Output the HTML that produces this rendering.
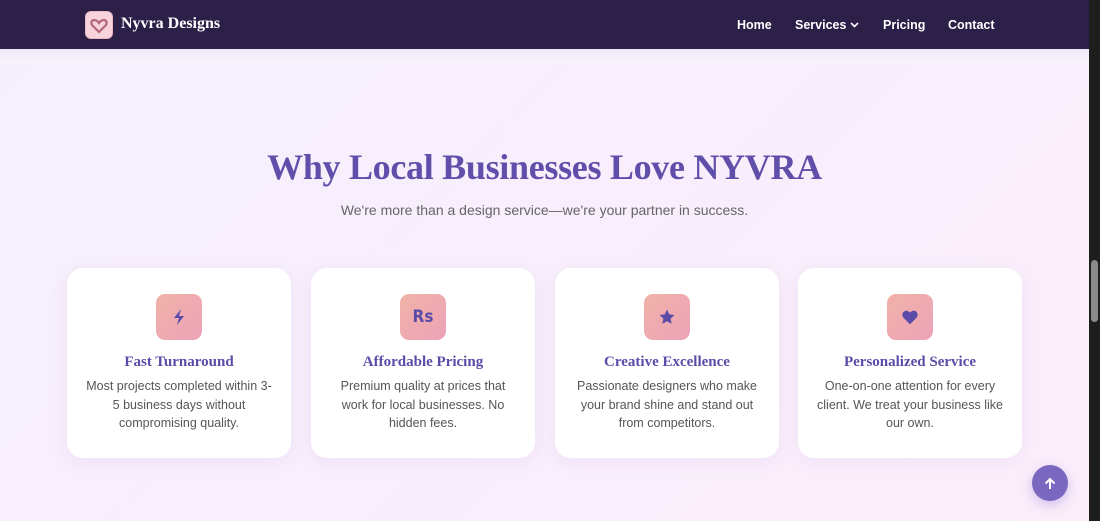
<!DOCTYPE html>
<html><head><style>
*{margin:0;padding:0;box-sizing:border-box}
body{width:1100px;height:521px;overflow:hidden;background:linear-gradient(135deg,#f5effd,#fbeefa);font-family:"Liberation Sans",sans-serif;position:relative}
.hdr{position:absolute;left:0;top:0;width:1089px;height:49px;background:#2c1f48}
.strip{position:absolute;left:0;top:49px;width:1089px;height:15px;background:linear-gradient(#eeeaf6,#f7f3fc)}
.logo{position:absolute;left:85px;top:11px;width:28px;height:28px;border-radius:6px;background:#f9d3dc;border:1px solid #e9b9c8}
.brand{position:absolute;left:121px;top:15px;color:#fff;font:bold 16px "Liberation Serif",serif}
.nav{position:absolute;top:18px;color:#fff;font-size:12.5px;font-weight:bold}
.sb{position:absolute;right:0;top:0;width:11px;height:521px;background:#1e1e1e}
.thumb{position:absolute;right:2px;top:260px;width:7px;height:62px;background:#8a8a8a;border-radius:4px}
h1{position:absolute;left:0;width:1089px;top:146px;text-align:center;color:#5f4eaa;font:bold 36px "Liberation Serif",serif;letter-spacing:-0.3px}
.sub{position:absolute;left:0;width:1089px;top:202px;text-align:center;color:#666;font-size:14px}
.card{position:absolute;top:268px;width:224px;height:190px;background:#fff;border-radius:16px;box-shadow:0 4px 18px rgba(150,110,200,.10);text-align:center}
.ic{position:absolute;left:89px;top:26px;width:46px;height:46px;border-radius:9px;background:linear-gradient(135deg,#f0b2a7,#eca3b8);display:flex;align-items:center;justify-content:center;color:#5b4ba8}
.t{position:absolute;top:86px;left:0;width:100%;color:#5b4ba8;font:bold 15px "Liberation Serif",serif}
.d{position:absolute;top:109px;left:18px;right:18px;color:#555;font-size:12.5px;line-height:18.5px}
.up{position:absolute;left:1032px;top:465px;width:36px;height:36px;border-radius:50%;background:#7a67c0;box-shadow:0 4px 12px rgba(120,100,200,.35);color:#fff;display:flex;align-items:center;justify-content:center}
</style></head><body>
<div class="hdr"></div><div class="strip"></div>
<div class="logo"><svg width="26" height="26" viewBox="0 0 26 26"><path d="M13 20 L6 13 Q4 9 8 8 Q11 8 13 11 Q15 8 18 8 Q22 9 20 13 Z" fill="none" stroke="#b5667f" stroke-width="2.2"/></svg></div>
<div class="brand">Nyvra Designs</div>
<div class="nav" style="left:737px">Home</div>
<div class="nav" style="left:795px">Services <svg width="9" height="8" viewBox="0 0 9 8"><path d="M1 2l3.5 3.5L8 2" fill="none" stroke="#fff" stroke-width="1.6"/></svg></div>
<div class="nav" style="left:883px">Pricing</div>
<div class="nav" style="left:948px">Contact</div>
<h1>Why Local Businesses Love NYVRA</h1>
<div class="sub">We're more than a design service—we're your partner in success.</div>
<div class="card" style="left:67px"><div class="ic"><svg width="16" height="18" viewBox="0 0 16 18"><path d="M10 1 L3 10 H8 L6 17 L13 8 H8 Z" fill="#5b4ba8"/></svg></div><div class="t">Fast Turnaround</div><div class="d">Most projects completed within 3-5 business days without compromising quality.</div></div>
<div class="card" style="left:311px"><div class="ic"><span style="font-size:17px;font-weight:bold;font-family:'DejaVu Sans Condensed','Liberation Sans',sans-serif">Rs</span></div><div class="t">Affordable Pricing</div><div class="d">Premium quality at prices that work for local businesses. No hidden fees.</div></div>
<div class="card" style="left:555px"><div class="ic"><svg width="18" height="18" viewBox="0 0 24 24"><path d="M12 2l3 6.5 7 .8-5.2 4.8 1.4 7L12 17.6 5.8 21l1.4-7L2 9.3l7-.8z" fill="#5b4ba8"/></svg></div><div class="t">Creative Excellence</div><div class="d">Passionate designers who make your brand shine and stand out from competitors.</div></div>
<div class="card" style="left:798px"><div class="ic"><svg width="18" height="16" viewBox="0 0 24 22"><path d="M12 21L3 12Q0 8 3 4Q7 0 12 5Q17 0 21 4Q24 8 21 12Z" fill="#5b4ba8"/></svg></div><div class="t">Personalized Service</div><div class="d">One-on-one attention for every client. We treat your business like our own.</div></div>
<div class="up"><svg width="12" height="13" viewBox="0 0 12 13"><path d="M6 12V2M1.5 6.5L6 2l4.5 4.5" fill="none" stroke="#fff" stroke-width="2"/></svg></div>
<div class="sb"><div class="thumb"></div></div>
</body></html>
